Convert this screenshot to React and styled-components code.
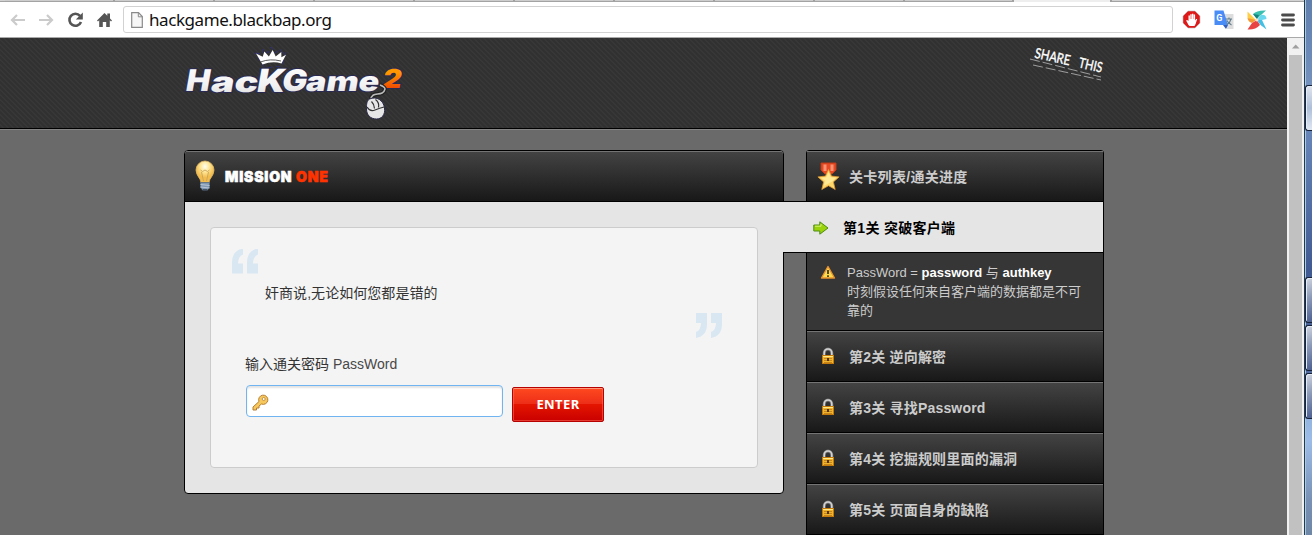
import React from 'react';
import styled, { createGlobalStyle } from 'styled-components';

const Global = createGlobalStyle`
  * { box-sizing: border-box; }
  body { margin: 0; overflow: hidden; background: #6a6a6a; font-family: "Liberation Sans", "Noto Sans CJK SC", sans-serif; }
`;

const Screen = styled.div`display: flex; width: 1312px; height: 535px; overflow: hidden;`;
const Browser = styled.div`display: flex; flex-direction: column; width: 1304px; height: 535px;`;

const TabStrip = styled.div`
  display: flex; height: 2px; flex: none; padding-left: 5px; background: #d2d2d2; border-bottom: 1px solid #a3a3a3;
`;
const Tab = styled.i`
  width: ${p => p.$w}px; height: ${p => (p.$active ? 2 : 1)}px; flex: none;
  background: ${p => (p.$active ? '#eeeeee' : '#cdcdcd')}; border-right: 2px solid #a0a0a0;
`;
const Toolbar = styled.div`
  display: flex; align-items: center; height: 36px; flex: none; padding: 0 7px 0 8px;
  background: #fff; border-bottom: 1px solid #a9a9a9;
`;
const NavIcons = styled.div`display: flex; gap: 9px; width: 115px; align-items: center;`;
const Address = styled.div`
  display: flex; align-items: center; width: 1050px; height: 27px; padding-left: 7px;
  border: 1px solid #d2d2d2; border-radius: 3px; background: #fff;
`;
const Url = styled.span`
  margin-left: 6px; font: 17px/24px "Noto Sans", sans-serif; color: #111; letter-spacing: -0.43px;
`;
const Extensions = styled.div`display: flex; align-items: center; margin-left: 9px; gap: 13px;`;

const Viewport = styled.div`display: flex; flex: 1; min-height: 0;`;
const Page = styled.div`width: 1287px; height: 497px; overflow: hidden; background: #6a6a6a;`;
const Scrollbar = styled.div`
  display: flex; flex-direction: column; align-items: center; width: 17px; background: #f1f1f1;
`;
const ScrollArrow = styled.svg`display: block; width: 17px; height: 17px; flex: none;`;
const Thumb = styled.div`width: 13px; flex: 1; background: #c1c1c1;`;

const Header = styled.header`
  height: 91px; padding: 0 184px; border-bottom: 1px solid #000; box-shadow: 0 1px 0 #858585;
  background: linear-gradient(45deg, #313131 25%, #373737 25%, #373737 50%, #313131 50%, #313131 75%, #373737 75%) 0 0 / 5px 5px;
`;
const HeaderInner = styled.div`display: flex; justify-content: space-between; width: 932px;`;
const Columns = styled.div`display: flex; gap: 22px; width: 920px; margin: 21px 0 0 184px; align-items: flex-start;`;

const Panel = styled.main`width: 600px; height: 344px; border: 1px solid #000; border-radius: 4px; background: #e5e5e5; overflow: hidden;`;
const BarBase = styled.div`
  display: flex; align-items: center; height: 51px; border-bottom: 1px solid #000;
  background: linear-gradient(#444, #181818); box-shadow: inset 0 1px 0 #747474;
`;
const PanelTitle = styled(BarBase)`
  padding-left: 9px; color: #fff; font: 900 14px/20px Inter, sans-serif;
`;
const TitleText = styled.h1`
  margin: 2px 0 0 9px; font: inherit; letter-spacing: 0.8px; text-transform: uppercase; -webkit-text-stroke: 0.6px currentColor;
  white-space: nowrap;
`;
const Accent = styled.span`color: #ff3300;`;

const Box = styled.section`
  width: 548px; height: 241px; margin: 25px 0 0 25px; padding: 21px 35px 0 20px; border: 1px solid #ccc; border-radius: 4px; background: #f4f4f4;
`;
const Quote = styled.blockquote`
  display: flex; flex-direction: column; margin: 0; height: 90px; color: #333; font-size: 14px; line-height: 20px;
`;
const QuoteText = styled.p`margin: 9px 0 0 34px; letter-spacing: 0.05px;`;
const CloseMark = styled.div`display: flex; justify-content: flex-end; margin-top: 10px; height: 26px;`;
const Form = styled.form`margin: 14px 0 0 14px; width: 360px;`;
const Label = styled.label`display: block; color: #333; font-size: 14px; line-height: 22px;`;
const Latin = styled.span`color: #484848;`;
const FieldRow = styled.div`display: flex; gap: 9px; margin: 10px 0 0 1px;`;
const Field = styled.div`
  display: flex; align-items: center; width: 257px; height: 32px; padding: 2px 0 0 5px;
  border: 1px solid #70b5f2; border-radius: 4px; background: #fff; box-shadow: inset 0 2px 2px #e3e3e3;
`;
const Enter = styled.button`
  width: 92px; height: 35px; margin-top: 2px; padding: 0; border: 1px solid #b70000; border-radius: 2px;
  background: linear-gradient(#ff4a20, #ec2d18 49%, #e41500 50%, #c90000);
  box-shadow: inset 0 1px 0 #ff9678, inset 0 0 0 1px rgba(255,120,100,.5);
  color: #fff; font: 700 13px/33px "Noto Sans", sans-serif; letter-spacing: 0.4px;
`;

const Sidebar = styled.aside`width: 298px; border: 1px solid #000; border-top-left-radius: 3px; border-top-right-radius: 3px;`;
const SideTitle = styled(BarBase)`padding-left: 10px; color: #ccc; font-size: 14px; font-weight: 700; letter-spacing: 0.3px;`;
const SideTitleText = styled.h2`margin: 0 0 1px 9px; font: inherit;`;
const Current = styled.div`
  position: relative; display: flex; align-items: center; width: 320px; height: 52px; margin: -1px 0 0 -24px; padding-left: 30px;
  border: solid #000; border-width: 1px 0; background: #e5e5e5; color: #000; font-size: 14px; font-weight: 700; letter-spacing: 0.3px;
`;
const CurrentText = styled.span`margin: 0 0 1px 14px;`;
const Hint = styled.div`
  display: flex; gap: 11px; height: 78px; padding: 10px 13px 0; border-bottom: 1px solid #000; background: #363636;
`;
const HintText = styled.p`margin: 0; width: 240px; color: #ccc; font-size: 13px; line-height: 19px;`;
const Strong = styled.b`color: #fff;`;
const Locked = styled(BarBase)`padding-left: 13px; color: #ccc; font-size: 14px; font-weight: 700; letter-spacing: 0.2px;`;
const LockedText = styled.span`margin: 0 0 0 13px;`;

const Desktop = styled.div`
  display: flex; flex-direction: column; width: 8px; height: 535px; border-left: 1px solid #24384e;
  background: linear-gradient(#607fad 0, #7491bd 85px, #6583b6 140px, #405b93 270px, #4d6498 370px, #88a9d6 390px, #9dbde8 440px, #7891b5 500px, #6f87a6);
  box-shadow: inset 1px 0 0 #a9cbe6;
`;
const DeskButton = styled.div`
  height: 46px; margin-top: ${p => p.$gap}px; border: 1px solid #17233b; border-right: 0; border-radius: 3px 0 0 3px; flex: none;
  background: ${p => (p.$light ? 'linear-gradient(#e1e5ee, #aebfd9 50%, #dfe7f3)' : 'linear-gradient(150deg, #d3d8e2, #8e9cba 45%, #4b5f92)')};
  box-shadow: inset 1px 1px 0 #e2edf8;
`;

const Lock = () => (
  <svg width="16" height="18" viewBox="0 0 16 18">
    <path d="M4.2 9V6a3.8 4 0 0 1 7.6 0v3" fill="none" stroke="#777" strokeWidth="3" />
    <path d="M4.2 9V6a3.8 4 0 0 1 7.6 0v3" fill="none" stroke="#d3d3d3" strokeWidth="1.6" />
    <rect x="2.5" y="8.5" width="11" height="8" fill="#efb52f" stroke="#c57b0c" />
    <path d="M3 9.5h10" stroke="#ffe989" />
    <path d="M4 11.5h3m2 0h3M4 13.5h3m2 0h3M4 15.5h8" stroke="#bb7715" strokeWidth=".8" />
    <path d="M8 11v3" stroke="#513506" strokeWidth="2" />
  </svg>
);

const Bulb = () => (
  <svg width="22" height="32" viewBox="0 0 22 32">
    <defs><radialGradient id="bulb" cx=".5" cy=".25"><stop stopColor="#fffef1" /><stop offset=".5" stopColor="#ffe696" /><stop offset="1" stopColor="#f3bd4d" /></radialGradient></defs>
    <path d="M7 23c0-5-5-7-5-13a9 9 0 0 1 18 0c0 6-5 8-5 13z" fill="url(#bulb)" stroke="#e0b868" strokeWidth=".8" />
    <path d="M6.5 10l2 1.5 2.5-1.5 2.5 1.5 2-1.5M7.5 12l2 9m5-9l-2 9" fill="none" stroke="#c7a55c" strokeWidth=".9" />
    <path d="M6.5 22.5h9v5l-2.5 3H9l-2.5-3z" fill="#8198b3" stroke="#566b82" strokeWidth=".8" />
    <path d="M6.5 24.5l9 1m-9 1.5l9 1" stroke="#b7c5d4" />
    <path d="M9 30h4" stroke="#333c46" strokeWidth="1.5" />
  </svg>
);

const Medal = () => (
  <svg width="23" height="30" viewBox="0 0 23 30">
    <path d="M4 2h15v7l-4 4H8L4 9z" fill="#e74a24" stroke="#c23a17" />
    <path d="M6.5 3.5h3V10h-3zM13.5 3.5h3V10h-3z" fill="#f79272" />
    <path d="M11.5 8.5l3 6.6 7.6.8-5.7 5 1.8 7.6-6.7-3.8-6.7 3.8 1.8-7.6-5.7-5 7.6-.8z" fill="#ffd86b" stroke="#dc9731" strokeWidth=".8" />
    <path d="M11.5 11l2.2 5.2 5.5.6-4.500 4-7.500 4 1-5-4-3 5.200-.6z" fill="#fff2a9" opacity=".7" />
  </svg>
);

const Logo = () => (
  <svg width="220" height="90" viewBox="184 38 220 90" overflow="visible">
    <defs>
      <linearGradient id="silver" x2="0" y2="1"><stop stopColor="#fff" /><stop offset=".6" stopColor="#f2f2f2" /><stop offset="1" stopColor="#d9d9d9" /></linearGradient>
      <linearGradient id="orange" x2="0" y2="1"><stop offset=".3" stopColor="#ff9700" /><stop offset=".8" stopColor="#f04a00" /></linearGradient>
    </defs>
    <path d="M255 53l7 1 1-5 5 4 3-6 4 6 6-4 1 4 4-1-4 14-17 2z" fill="none" stroke="#30306e" strokeDasharray="5 3" />
    <path d="M256 53.5l6.700 3.300 1.700-5.200 4.500 5 3.800-6.700 3 6.700 5.600-4.600.1 5.200 4.600-2.400-4.500 8.700q-9-2.700-19 .9z" fill="#fff" />
    <path d="M261 61.8q9-3.400 20-.8" fill="none" stroke="#303030" strokeWidth=".8" />
    <g transform="translate(15 0) skewX(-10)" fontFamily="Inter, sans-serif" fontWeight="900" fill="url(#silver)" stroke="#292952" strokeWidth="2" paintOrder="stroke">
      <text x="186" y="91.5" fontSize="30" textLength="24" lengthAdjust="spacingAndGlyphs">H</text>
      <text x="211" y="92" fontSize="28" textLength="47" lengthAdjust="spacingAndGlyphs">ac</text>
      <text x="257" y="92.5" fontSize="32" textLength="28" lengthAdjust="spacingAndGlyphs">K</text>
      <text x="282" y="91.5" fontSize="30" textLength="25" lengthAdjust="spacingAndGlyphs">G</text>
      <text x="306" y="91.5" fontSize="27" textLength="73" lengthAdjust="spacingAndGlyphs">ame</text>
      <text x="382" y="88.500" fontSize="26" textLength="19" lengthAdjust="spacingAndGlyphs" fill="url(#orange)">2</text>
    </g>
    <path d="M371 100c0-10 12-2 14-11q0-2-5-4" fill="none" stroke="#222" strokeWidth="4" />
    <path d="M371 100c0-10 12-2 14-11q0-2-5-4" fill="none" stroke="#bbb" strokeWidth="1.5" />
    <path d="M369.5 99c7-3 14 1 15 9 1 7-3 11-8 11-6 0-10-4-10-10 0-5 0-8 3-10z" fill="#e6e6e6" stroke="#292948" />
    <path d="M367 107q3 5 8 3t9-3M371.5 101.500q3 3 3 7m1-9q4 3 3 8" fill="none" stroke="#333" strokeWidth="1.200" />
  </svg>
);

const ShareThis = () => (
  <svg width="90" height="50" viewBox="1026 38 90 50" overflow="visible">
    <g transform="translate(1034 57.5) rotate(12.5)" fontFamily="Lato, sans-serif" fontSize="14" fill="#fff" stroke="#fff" strokeWidth=".4">
      <text textLength="36" lengthAdjust="spacingAndGlyphs">SHARE</text>
      <text x="45" textLength="24" lengthAdjust="spacingAndGlyphs">THIS</text>
    </g>
    <path d="M1030 59l71 18M1033 65l68 15" stroke="#a9a9a9" strokeWidth=".9" strokeDasharray="10 3" />
  </svg>
);

const levels = ['第2关 逆向解密', '第3关 寻找Password', '第4关 挖掘规则里面的漏洞', '第5关 页面自身的缺陷'];
const tabs = [110, 100, 100, 100, 100, 100, 100, 100, 90];

export default function App() {
  return (
    <>
      <Global />
      <Screen>
        <Browser>
          <TabStrip>
            {tabs.map((w, i) => <Tab key={i} $w={w} />)}
            <Tab $w={109} />
            <Tab $w={98} $active />
          </TabStrip>
          <Toolbar>
            <NavIcons>
              <svg width="20" height="20" viewBox="0 0 20 20"><path d="M17 10H4m5-5l-5 5 5 5" fill="none" stroke="#cbcbcb" strokeWidth="2.2" /></svg>
              <svg width="20" height="20" viewBox="0 0 20 20"><path d="M2 10h13m-5-5l5 5-5 5" fill="none" stroke="#cbcbcb" strokeWidth="2.2" /></svg>
              <svg width="20" height="20" viewBox="0 0 20 20"><path d="M14 5.800A6 6 0 1 0 15 12" fill="none" stroke="#555" strokeWidth="2.6" /><path d="M16.800 2.500v7h-7z" fill="#555" /></svg>
              <svg width="20" height="20" viewBox="0 0 20 20"><path d="M2 10.500L9.500 3l2.800 2.800V3.500H15v5l2 2-1 1-1.200-1.200V17h-3.600v-5H7.800v5H4.200v-6.700L3 11.500z" fill="#555" /></svg>
            </NavIcons>
            <Address>
              <svg width="12" height="16" viewBox="0 0 12 16"><path d="M.7.7h6.800l3.800 3.800v10.800H.7z" fill="#f7f7f7" stroke="#8a8a8a" strokeWidth="1.2" /><path d="M7.300.8v4h4" fill="none" stroke="#8a8a8a" /></svg>
              <Url>hackgame.blackbap.org</Url>
            </Address>
            <Extensions>
              <svg width="19" height="19" viewBox="0 0 19 19"><path d="M6 1h7l5 5v7l-5 5H6l-5-5V6z" fill="#df1818" stroke="#b9b9b9" strokeWidth=".6" /><path d="M6.500 15l-2.400-4.400 1-.7 1.400 1V5.500h1.400V9h.4V4.300h1.400V9h.3V3.800h1.400V9h.3V4.600h1.400V10.500l1-1.500h1.100l-1.600 5-1.100 2H7.500z" fill="#fff" /></svg>
              <svg width="20" height="20" viewBox="0 0 20 20"><path d="M9 4h10.500v15H13z" fill="#ddd" /><path d="M.5.5h9L14 15H.5z" fill="#4a8cf5" /><path d="M9 15h5l-2 4z" fill="#315ebf" /><text x="2.2" y="11" fill="#fff" fontFamily="Roboto, sans-serif" fontSize="9" fontWeight="700">G</text><path d="M12 9h6m-3-1.500V9m2 0q-1 4-4 5.500m0-4q1 2.500 4.500 4.500" stroke="#607d8b" strokeWidth="1.1" fill="none" /></svg>
              <svg width="20" height="20" viewBox="0 0 20 20">
                <path d="M10 9L6 4q4-4 13-3.500L14 5z" fill="#3bbfae" />
                <path d="M9 10L.5 1.500V8l4 2z" fill="#fed04a" />
                <path d="M.5 8l8.500 2-4 3q-4-1-4.500-5z" fill="#f49a35" />
                <path d="M10 10l-5 3-4.500 6.500q8 .5 12.500-4.500z" fill="#e94444" />
                <path d="M10 10l4-5q5-1 5.500 4L15 10z" fill="#6ad8ee" />
                <path d="M10 10l5 0 4.500 9.500-6-4.500z" fill="#43bfe3" />
                <path d="M10 9L6 4l6 1z" fill="#17847d" />
                <circle cx="10" cy="10" r="1.500" fill="#ffe1cf" />
              </svg>
              <svg width="16" height="18" viewBox="0 0 16 18"><path d="M2.500 4h11m-11 5h11m-11 5h11" stroke="#4b4b4b" strokeWidth="2.800" strokeLinecap="round" /></svg>
            </Extensions>
          </Toolbar>
          <Viewport>
            <Page>
              <Header><HeaderInner><Logo /><ShareThis /></HeaderInner></Header>
              <Columns>
                <Panel>
                  <PanelTitle><Bulb /><TitleText>Mission <Accent>One</Accent></TitleText></PanelTitle>
                  <Box>
                    <Quote>
                      <svg width="27" height="25" viewBox="-1 .5 27 25"><path d="M11 0v6Q6 8 6 15h5v10H0V14Q0 2 11 0zm15 0v6q-5 2-5 9h5v10H15V14Q15 2 26 0z" fill="#d9e7f2" /></svg>
                      <QuoteText>奸商说,无论如何您都是错的</QuoteText>
                      <CloseMark><svg width="26" height="25" viewBox="0 0 26 25"><path d="M0 0h11v11Q11 23 0 25v-6q5-2 5-9H0zm15 0h11v11Q26 23 15 25v-6q5-2 5-9h-5z" fill="#d9e7f2" /></svg></CloseMark>
                    </Quote>
                    <Form>
                      <Label>输入通关密码 <Latin>PassWord</Latin></Label>
                      <FieldRow>
                        <Field><svg width="17" height="17" viewBox="0 0 17 17"><path d="M7 7.500L1 13v3h3.500v-2H7v-2l2.500-2A4.600 4.600 0 1 0 7 7.500z" fill="#f7c95c" stroke="#b67d31" /><circle cx="11.700" cy="5" r="1.500" fill="#fff" stroke="#b67d31" strokeWidth=".8" /></svg></Field>
                        <Enter type="button">ENTER</Enter>
                      </FieldRow>
                    </Form>
                  </Box>
                </Panel>
                <Sidebar>
                  <SideTitle><Medal /><SideTitleText>关卡列表/通关进度</SideTitleText></SideTitle>
                  <Current>
                    <svg width="16" height="16" viewBox="0 0 16 16"><path d="M.8 6h6V2.800L15 9l-8.200 6.200V12h-6z" fill="#9ad20b" stroke="#4e8c12" /><path d="M2 7.200h6V5" fill="none" stroke="#d6f47c" /></svg>
                    <CurrentText>第1关 突破客户端</CurrentText>
                  </Current>
                  <Hint>
                    <svg width="16" height="18" viewBox="0 0 16 18"><path d="M8 3.500L14.500 15h-13z" fill="#ffda4c" stroke="#e7922e" strokeWidth="1.400" strokeLinejoin="round" /><path d="M8 7v4m0 1.300v1.600" stroke="#333" strokeWidth="1.700" /></svg>
                    <HintText>PassWord = <Strong>password</Strong> 与 <Strong>authkey</Strong><br />时刻假设任何来自客户端的数据都是不可靠的</HintText>
                  </Hint>
                  {levels.map(t => <Locked key={t}><Lock /><LockedText>{t}</LockedText></Locked>)}
                </Sidebar>
              </Columns>
            </Page>
            <Scrollbar>
              <ScrollArrow viewBox="0 0 17 17"><path d="M5 10.500h7.500L8.700 6.500z" fill="#a0a0a0" /></ScrollArrow>
              <Thumb />
            </Scrollbar>
          </Viewport>
        </Browser>
        <Desktop>
          <DeskButton $gap={85} $light />
          <DeskButton $gap={146} />
          <DeskButton $gap={2} />
          <DeskButton $gap={2} />
        </Desktop>
      </Screen>
    </>
  );
}
